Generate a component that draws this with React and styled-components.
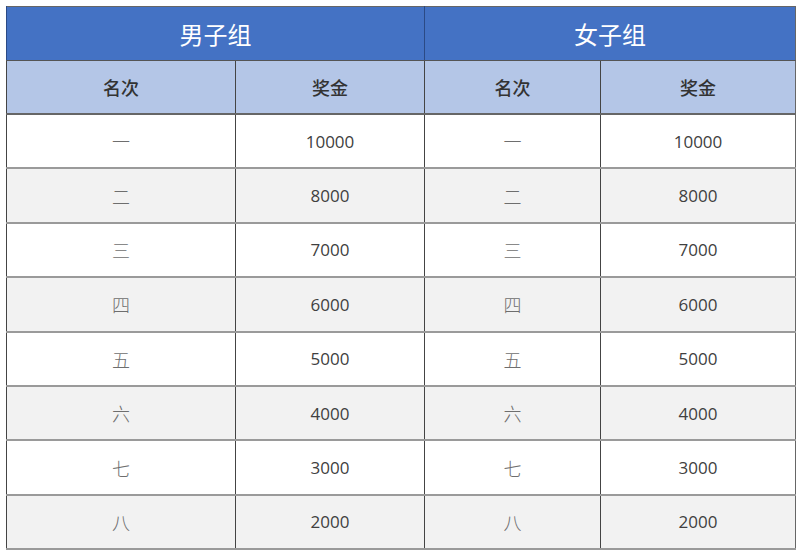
import React from "react";
import styled, { createGlobalStyle } from "styled-components";

const GlobalStyle = createGlobalStyle`
  body {
    margin: 0;
    background: #ffffff;
    font-family: "Noto Sans CJK SC", sans-serif;
  }
`;

const Page = styled.div`
  padding: 6px 5px 0 6px;
`;

const Table = styled.table`
  width: 789px;
  border-collapse: collapse;
  table-layout: fixed;
  border: 1px solid #666666;
`;

const GroupHeader = styled.th`
  height: 53px;
  padding: 0;
  background-color: #4472c4;
  color: #ffffff;
  font-family: "Noto Sans CJK SC", serif;
  font-size: 24px;
  font-weight: 400;
  text-align: center;
  border-left: 1px solid #2b4a85;
  border-bottom: 1px solid #555555;
`;

const ColHeader = styled.th`
  height: 52px;
  padding: 0;
  background-color: #b4c6e7;
  color: #333333;
  font-family: "Noto Sans CJK SC", serif;
  font-size: 18px;
  font-weight: 500;
  text-align: center;
  border-left: 1px solid #444444;
  border-bottom: 2px solid #666666;
`;

const Row = styled.tr`
  background-color: ${(p) => (p.$shade ? "#f2f2f2" : "#ffffff")};
`;

const Cell = styled.td`
  height: 52.4px;
  padding: 0;
  text-align: center;
  border-left: 1px solid #444444;
  border-bottom: 2px solid #9a9a9a;
  color: ${(p) => (p.$numeral ? "#6e6e6e" : "#404040")};
  font-family: ${(p) =>
    p.$numeral ? '"Noto Sans CJK SC", serif' : '"Open Sans", "Noto Sans", sans-serif'};
  font-size: ${(p) => (p.$numeral ? "18px" : "17px")};
  font-weight: ${(p) => (p.$numeral ? 300 : 400)};
`;

const prizes = [
  ["一", "10000"],
  ["二", "8000"],
  ["三", "7000"],
  ["四", "6000"],
  ["五", "5000"],
  ["六", "4000"],
  ["七", "3000"],
  ["八", "2000"],
];

const App = () => {
  return (
    <Page>
      <GlobalStyle />
      <Table>
        <colgroup>
          <col style={{ width: 229 }} />
          <col style={{ width: 189 }} />
          <col style={{ width: 176 }} />
          <col style={{ width: 195 }} />
        </colgroup>
        <thead>
          <tr>
            <GroupHeader colSpan={2}>男子组</GroupHeader>
            <GroupHeader colSpan={2}>女子组</GroupHeader>
          </tr>
          <tr>
            <ColHeader>名次</ColHeader>
            <ColHeader>奖金</ColHeader>
            <ColHeader>名次</ColHeader>
            <ColHeader>奖金</ColHeader>
          </tr>
        </thead>
        <tbody>
          {prizes.map(([rank, amount], i) => (
            <Row key={rank} $shade={i % 2 === 1}>
              <Cell $numeral>{rank}</Cell>
              <Cell>{amount}</Cell>
              <Cell $numeral>{rank}</Cell>
              <Cell>{amount}</Cell>
            </Row>
          ))}
        </tbody>
      </Table>
    </Page>
  );
};

export default App;
